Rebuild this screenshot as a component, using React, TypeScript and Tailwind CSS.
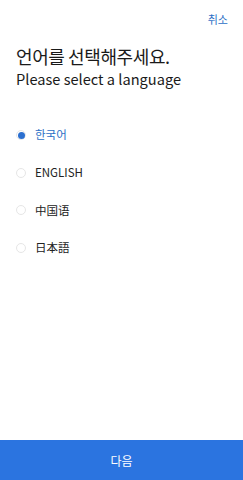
import { useState } from "react";

const LANGS = ["한국어", "ENGLISH", "中国语", "日本語"];

const FONT = {
  fontFamily: '"Noto Sans CJK KR", "Noto Sans CJK SC", "Noto Sans", sans-serif',
};

export default function App() {
  const [selected, setSelected] = useState(0);

  return (
    <div className="flex h-[480px] w-[243px] flex-col bg-white" style={FONT}>
      <div className="flex justify-end px-[15px] pt-[11px]">
        <button type="button" className="text-[11px] leading-[16px] text-[#2c6fc6]">
          취소
        </button>
      </div>

      <div className="px-4 pt-[17px]">
        <h1 className="text-[18px] leading-[24px] tracking-[-0.4px] text-[#1a1a1a]">
          언어를 선택해주세요.
        </h1>
        <p className="text-[14.6px] leading-[22px] text-[#1a1a1a]">Please select a language</p>
      </div>

      <ul className="mt-[35px] flex flex-col gap-[17.7px] px-4">
        {LANGS.map((l, i) => (
          <li key={l}>
            <button
              type="button"
              onClick={() => setSelected(i)}
              className="flex h-[20px] items-center gap-[9px]"
            >
              <span className="flex h-[10px] w-[10px] items-center justify-center rounded-full border border-[#e6e6e6]">
                {selected === i && <span className="h-[7px] w-[7px] rounded-full bg-[#2b6fcf]" />}
              </span>
              <span
                className={
                  selected === i
                    ? "text-[11.5px] text-[#2c6fc6]"
                    : "text-[11.5px] text-[#222]"
                }
              >
                {l}
              </span>
            </button>
          </li>
        ))}
      </ul>

      <div className="flex-1" />

      <button
        type="button"
        className="h-[40px] w-full bg-[#2b74e0] pt-[1px] text-[12px] text-white"
      >
        다음
      </button>
    </div>
  );
}
